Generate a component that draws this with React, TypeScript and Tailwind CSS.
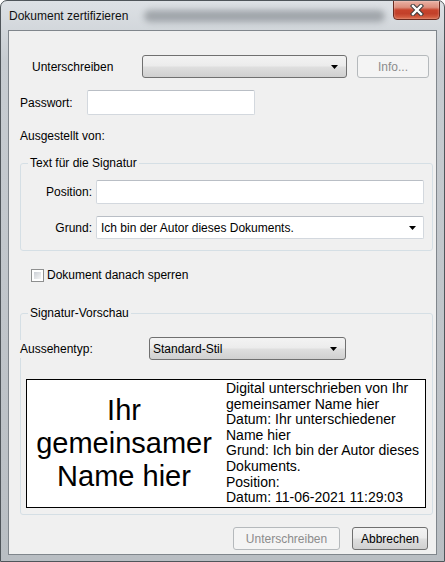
function Arrow() {
  return (
    <svg width="7" height="4" viewBox="0 0 7 4" className="shrink-0">
      <path d="M0 0 H7 L3.5 4 Z" fill="#000" />
    </svg>
  );
}

function Combo({ text, width }: { text?: string; width: string }) {
  return (
    <div
      className={`${width} h-[23px] flex items-center justify-between pl-[3px] pr-[8px] border border-[#707070] rounded-[3px] bg-[linear-gradient(#f3f3f3,#ececec_45%,#dedede_55%,#d0d0d0)]`}
    >
      <span>{text}</span>
      <Arrow />
    </div>
  );
}

function TextField({ width, height }: { width: string; height: string }) {
  return (
    <div
      className={`${width} ${height} bg-white border border-[#d3d8de] border-t-[#b9bec5] rounded-[2px]`}
    />
  );
}

export default function App() {
  return (
    <div className="w-[445px] h-[562px] flex flex-col border border-[#4f555a] rounded-t-[7px] bg-[linear-gradient(180deg,#dde1e5,#c7ccd1_60px,#b9bec3)] font-['Liberation_Sans',Arial,sans-serif] text-[12px] text-black overflow-hidden">
      {/* title bar */}
      <div className="h-[29px] flex items-center shrink-0">
        <span className="pl-[8px] text-[12px] text-[#111]">Dokument zertifizieren</span>
        <div className="flex-1 flex items-center px-[8px] ml-[8px]">
          <div className="w-full h-[12px] rounded-full bg-[#6a7076] opacity-50 blur-[3px]" />
        </div>
        <div className="self-start -mt-px mr-[4px] w-[47px] h-[20px] flex items-center justify-center rounded-b-[4px] border border-[#6b2a1f] bg-[linear-gradient(#eab0a2,#dc8f7e_35%,#c7432c_50%,#c2402a_70%,#d9684a)] shadow-[inset_0_0_2px_rgba(255,255,255,0.6)]">
          <svg width="14" height="12" viewBox="0 0 14 12">
            <path d="M3 2 L11 10 M11 2 L3 10" stroke="#3b3b3b" strokeWidth="4.4" strokeLinecap="square" />
            <path d="M3 2 L11 10 M11 2 L3 10" stroke="#fff" strokeWidth="2.4" strokeLinecap="square" />
          </svg>
        </div>
      </div>

      {/* client area */}
      <div className="flex-1 mx-[7px] mb-[6px] border border-[#80868c] bg-[#f0f0f0] flex flex-col">
        <div className="mt-[24px] ml-[23px] flex items-center">
          <span className="w-[110px]">Unterschreiben</span>
          <Combo width="w-[205px]" />
          <div className="ml-[10px] w-[72px] h-[23px] flex items-center justify-center border border-[#b5b9bc] rounded-[3px] bg-[#f4f4f4] text-[#8c8c8c]">
            Info...
          </div>
        </div>

        <div className="mt-[12px] ml-[11px] flex items-center">
          <span className="w-[67px]">Passwort:</span>
          <TextField width="w-[168px]" height="h-[25px]" />
        </div>

        <div className="mt-[14px] ml-[11px] leading-[14px]">Ausgestellt von:</div>

        <fieldset className="mt-[13px] ml-[11px] mr-[3px] border border-[#d5dfe5] rounded-[3px] pt-[10px] pb-[11px] pr-[8px]">
          <legend className="ml-[7px] px-[2px] leading-[14px]">Text für die Signatur</legend>
          <div className="flex items-center">
            <span className="w-[71px] text-right mr-[4px]">Position:</span>
            <TextField width="w-[328px]" height="h-[24px]" />
          </div>
          <div className="mt-[12px] flex items-center">
            <span className="w-[71px] text-right mr-[4px]">Grund:</span>
            <div className="w-[328px] h-[23px] flex items-center justify-between pl-[4px] pr-[7px] bg-white border border-[#d3d8de] border-t-[#b9bec5] rounded-[2px]">
              <span>Ich bin der Autor dieses Dokuments.</span>
              <Arrow />
            </div>
          </div>
        </fieldset>

        <div className="mt-[18px] ml-[22px] flex items-center leading-[13px]">
          <div className="w-[13px] h-[13px] border border-[#8e8f8f] bg-white p-[2px]">
            <div className="w-full h-full bg-[linear-gradient(135deg,#cbcfd5,#f6f6f6)]" />
          </div>
          <span className="ml-[3px]">Dokument danach sperren</span>
        </div>

        <fieldset className="mt-[24px] ml-[11px] mr-[3px] border border-[#d5dfe5] rounded-[3px] pt-[17px] pb-[6px]">
          <legend className="ml-[7px] px-[2px] leading-[14px]">Signatur-Vorschau</legend>
          <div className="flex items-center">
            <span className="-ml-[2px] pl-[1px] w-[130px] bg-[#f0f0f0]">Aussehentyp:</span>
            <Combo text="Standard-Stil" width="w-[197px]" />
          </div>
          <div className="mt-[19px] ml-[5px] w-[400px] h-[129px] border border-black bg-white flex">
            <div className="w-[194px] flex flex-col items-center justify-center text-[29px] leading-[33px] text-center">
              <div>Ihr</div>
              <div>gemeinsamer</div>
              <div>Name hier</div>
            </div>
            <div className="pl-[5px] pt-px text-[14px] leading-[15.6px] whitespace-nowrap">
              <div>Digital unterschrieben von Ihr</div>
              <div>gemeinsamer Name hier</div>
              <div>Datum: Ihr unterschiedener</div>
              <div>Name hier</div>
              <div>Grund: Ich bin der Autor dieses</div>
              <div>Dokuments.</div>
              <div>Position:</div>
              <div>Datum: 11-06-2021 11:29:03</div>
            </div>
          </div>
        </fieldset>

        <div className="mt-[12px] mr-[8px] flex justify-end gap-[12px]">
          <div className="w-[107px] h-[23px] flex items-center justify-center border border-[#b5b9bc] rounded-[3px] bg-[#f4f4f4] text-[#8c8c8c]">
            Unterschreiben
          </div>
          <div className="w-[76px] h-[23px] flex items-center justify-center border border-[#707070] rounded-[3px] bg-[linear-gradient(#f3f3f3,#ececec_45%,#dedede_55%,#d0d0d0)]">
            Abbrechen
          </div>
        </div>
      </div>
    </div>
  );
}
